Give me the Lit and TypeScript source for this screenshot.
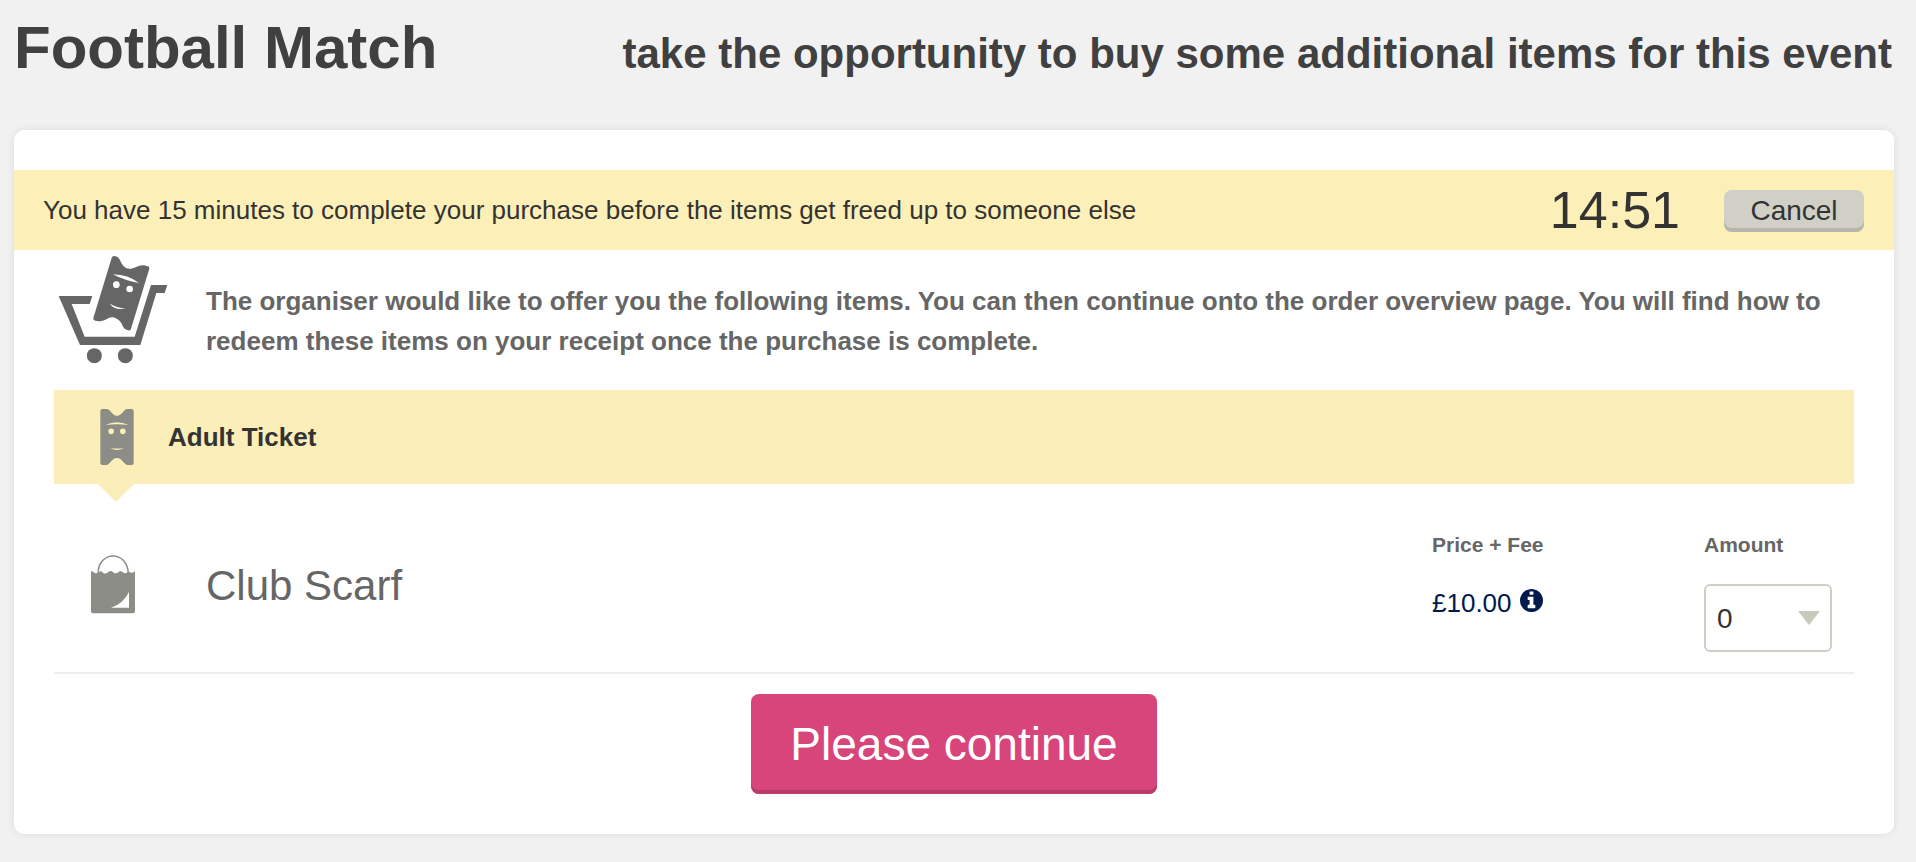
import { LitElement, html, css, svg } from "lit";
import { customElement, state } from "lit/decorators.js";

const cartIcon = svg`
  <path d="M56 168H157L149 192H95L134 290H284L333 135H382L374 159H349L301 315H120Z"/>
  <circle cx="163" cy="347" r="22.5"/>
  <circle cx="256" cy="347" r="22.5"/>
  <path fill-rule="evenodd" d="M224 48C245 52 238 72 257 83C277 95 295 69 318 77Q330 79 328 86L273 266Q271 274 262 270C243 264 252 248 230 236C205 222 200 248 172 243Q158 242 160 234L215 54Q217 47 224 48Z
    M218 103Q265 104 297 129Q255 122 218 103Z
    M219 134a10 10 0 1 0 20 0a10 10 0 1 0 -20 0Z
    M259 147a10 10 0 1 0 20 0a10 10 0 1 0 -20 0Z
    M209 191Q230 203 257 205Q225 213 209 191Z"/>`;

const ticketIcon = svg`
  <path fill-rule="evenodd" d="M187 84H199C213 84 214 104 231 104C248 104 250 84 263 84H275Q281 84 281 90V246Q281 252 275 252H264C252 252 247 231 231 231C215 231 210 252 198 252H187Q181 252 181 246V90Q181 84 187 84Z
    M196 132Q231 115 266 132Q231 127 196 132Z
    M205 151a8.5 8.5 0 1 0 17 0a8.5 8.5 0 1 0 -17 0Z
    M240 151a8.5 8.5 0 1 0 17 0a8.5 8.5 0 1 0 -17 0Z
    M211 201Q231 204 252 201Q231 213 211 201Z"/>`;

const bagIcon = svg`
  <path d="M174 580C176 509 262 509 265 580" fill="none" stroke="currentColor" stroke-width="4.5"/>
  <path fill-rule="evenodd" d="M153 573Q159 573 163 577Q170 582 178 574Q184 571 189 577Q196 583 204 576Q210 570 216 573Q222 580 228 579Q234 577 240 572Q247 574 252 578Q257 581 264 574Q270 574 274 578Q280 576 285 573V693Q285 699 279 699H159Q153 699 153 693Z
    M213 682Q249 671 267 635V682Z"/>`;

const infoIcon = svg`
  <path d="M1024 1248v-160q0-14-9-23t-23-9h-96v-512q0-14-9-23t-23-9h-320q-14 0-23 9t-9 23v160q0 14 9 23t23 9h96v320h-96q-14 0-23 9t-9 23v160q0 14 9 23t23 9h448q14 0 23-9t9-23zm-128-896v-160q0-14-9-23t-23-9h-192q-14 0-23 9t-9 23v160q0 14 9 23t23 9h192q14 0 23-9t9-23zm640 416q0 209-103 385.5t-279.5 279.5-385.5 103-385.5-103-279.5-279.5-103-385.5 103-385.5 279.5-279.5 385.5-103 385.5 103 279.5 279.5 103 385.5z"/>`;

@customElement("app-root")
export class AppRoot extends LitElement {
  @state() private amount = 0;

  static styles = css`
    :host {
      display: block;
      box-sizing: border-box;
      min-height: 100vh;
      padding: 0 22px 28px 14px;
      background: #f1f1f1;
      color: #333;
      font-family: "Liberation Sans", Arial, Helvetica, sans-serif;
      font-size: 26px;
    }
    * { box-sizing: border-box; }
    h1, h2, h3, p { margin: 0; }
    button, select { font-family: inherit; color: inherit; }
    svg { display: block; fill: currentColor; }

    .header {
      display: flex;
      align-items: baseline;
      justify-content: space-between;
      padding: 18px 2px 52px 0;
      color: #404040;
    }
    .title { font-size: 60px; line-height: 60px; }
    .subtitle { font-size: 42px; line-height: 44px; }

    .card {
      padding: 40px 0;
      border-radius: 10px;
      background: #fff;
      box-shadow: 0 0 8px rgba(0, 0, 0, 0.09);
    }
    .timer-bar {
      display: flex;
      align-items: center;
      min-height: 80px;
      padding: 0 30px 0 29px;
      background: #fdefb8;
    }
    .notice { flex: 1; line-height: 40px; }
    .clock { margin-right: 44px; font-size: 52px; line-height: 60px; }
    .cancel {
      width: 140px;
      height: 42px;
      margin-top: 2px;
      padding: 0;
      border: 0;
      border-radius: 8px;
      background: #d0d0c6;
      box-shadow: inset 0 -4px #b5b5ab;
      font-size: 28px;
      line-height: 42px;
    }

    .content { padding: 0 40px; }
    .intro {
      display: grid;
      grid-template-columns: 152px 1fr;
      padding: 5px 0 26px;
      color: #666;
    }
    .cart { width: 110px; height: 109px; margin-left: 4px; }
    .intro-text { padding-top: 26px; font-weight: bold; line-height: 40px; }

    .group {
      position: relative;
      display: flex;
      align-items: center;
      gap: 34px;
      height: 94px;
      padding-left: 46px;
      background: #fceeb9;
    }
    .group::after {
      content: "";
      position: absolute;
      top: 100%;
      left: 44px;
      border: 18px solid transparent;
      border-top-color: #fceeb9;
      border-bottom: 0;
    }
    .ticket { width: 34px; height: 56px; color: #8b8d86; }
    .group-name { font-size: 26px; line-height: 40px; }

    .item {
      display: grid;
      grid-template-columns: 152px 1fr 272px 150px;
      padding: 48px 0 20px;
      border-bottom: 2px solid #eee;
      color: #666;
    }
    .bag { width: 44px; height: 60px; margin: 22px 0 0 37px; color: #8b8d86; }
    .item-name { padding-top: 30px; font-size: 42px; font-weight: normal; line-height: 48px; }
    .field { display: flex; flex-direction: column; align-items: flex-start; gap: 26px; }
    .field-label { font-size: 21px; font-weight: bold; line-height: 26px; }
    .price {
      display: flex;
      gap: 8px;
      color: #001a4d;
      line-height: 38px;
      text-decoration: none;
    }
    .info { width: 23px; height: 23px; margin-top: 5px; }
    .select-wrap { display: grid; align-items: center; width: 128px; }
    .amount {
      grid-area: 1 / 1;
      width: 100%;
      height: 68px;
      padding: 0 11px;
      border: 2px solid #cfcfc4;
      border-radius: 6px;
      appearance: none;
      background: #fff;
      color: #333;
      font-size: 28px;
    }
    .caret {
      grid-area: 1 / 1;
      justify-self: end;
      margin-right: 12px;
      border: 11px solid transparent;
      border-top: 14px solid #c8c8bb;
      border-bottom: 0;
      pointer-events: none;
    }

    .actions { display: flex; justify-content: center; padding-top: 20px; }
    .continue {
      height: 100px;
      padding: 0 39px;
      border: 0;
      border-radius: 8px;
      background: #d7457a;
      box-shadow: inset 0 -4px #bb3c6b;
      color: #fff;
      font-size: 46px;
    }
  `;

  private onAmount(e: Event) {
    this.amount = Number((e.target as HTMLSelectElement).value);
  }

  render() {
    return html`
      <header class="header">
        <h1 class="title">Football Match</h1>
        <h2 class="subtitle">take the opportunity to buy some additional items for this event</h2>
      </header>
      <main class="card">
        <div class="timer-bar">
          <p class="notice">You have 15 minutes to complete your purchase before the items get freed up to someone else</p>
          <span class="clock" role="timer">14:51</span>
          <button class="cancel" type="button">Cancel</button>
        </div>
        <div class="content">
          <div class="intro">
            <svg class="cart" viewBox="54 45 330 327" aria-hidden="true">${cartIcon}</svg>
            <p class="intro-text">The organiser would like to offer you the following items. You can then continue onto the order overview page. You will find how to redeem these items on your receipt once the purchase is complete.</p>
          </div>
          <div class="group">
            <svg class="ticket" viewBox="180 84 102 168" aria-hidden="true">${ticketIcon}</svg>
            <h2 class="group-name">Adult Ticket</h2>
          </div>
          <div class="item">
            <svg class="bag" viewBox="153 521 132 180" aria-hidden="true">${bagIcon}</svg>
            <h3 class="item-name">Club Scarf</h3>
            <div class="field">
              <span class="field-label">Price + Fee</span>
              <a class="price" href="#fees">£10.00 <svg class="info" viewBox="0 0 1536 1536" aria-hidden="true">${infoIcon}</svg></a>
            </div>
            <div class="field">
              <label class="field-label" for="amount">Amount</label>
              <div class="select-wrap">
                <select class="amount" id="amount" @change=${this.onAmount}>
                  ${[0, 1, 2, 3, 4, 5].map((n) => html`<option value=${n} ?selected=${n === this.amount}>${n}</option>`)}
                </select>
                <span class="caret"></span>
              </div>
            </div>
          </div>
          <div class="actions">
            <button class="continue" type="button">Please continue</button>
          </div>
        </div>
      </main>
    `;
  }
}
